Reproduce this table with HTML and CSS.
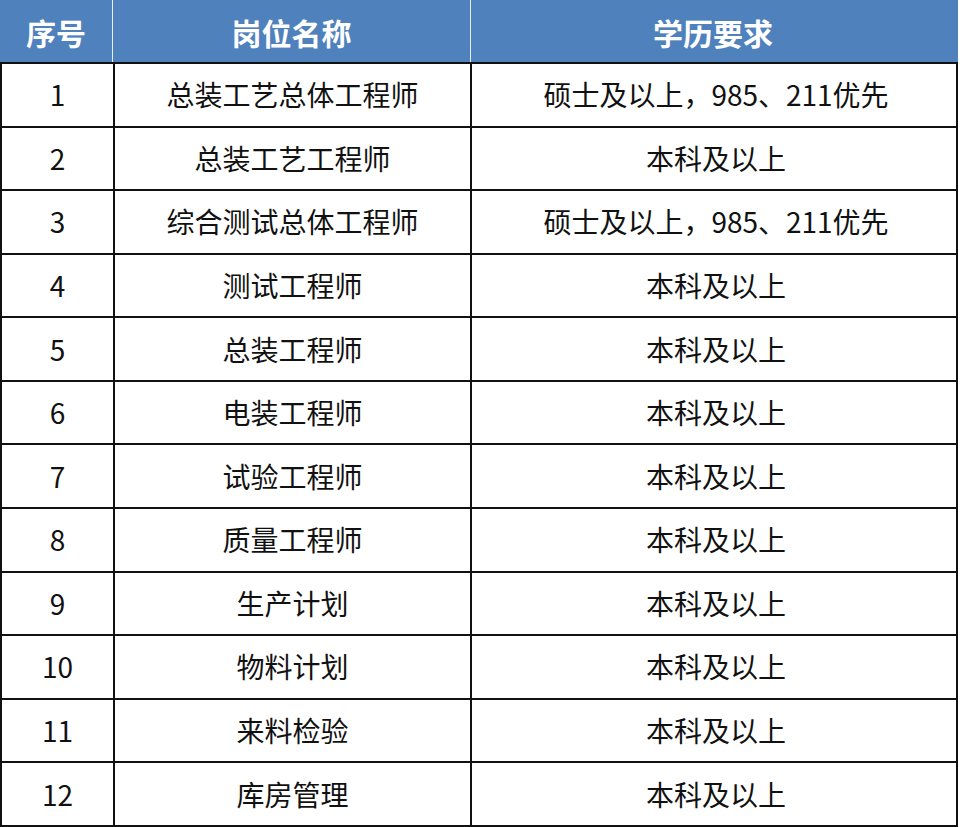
FILE: index.html
```html
<!DOCTYPE html>
<html lang="zh">
<head>
<meta charset="utf-8">
<link rel="stylesheet" href="styles.css">
</head>
<body>
<div class="sheet">
  <div class="row head">
    <div class="cell c1">序号</div>
    <div class="cell c2">岗位名称</div>
    <div class="cell c3">学历要求</div>
  </div>
  <div class="row"><div class="cell c1">1</div><div class="cell c2">总装工艺总体工程师</div><div class="cell c3">硕士及以上，985、211优先</div></div>
  <div class="row"><div class="cell c1">2</div><div class="cell c2">总装工艺工程师</div><div class="cell c3">本科及以上</div></div>
  <div class="row"><div class="cell c1">3</div><div class="cell c2">综合测试总体工程师</div><div class="cell c3">硕士及以上，985、211优先</div></div>
  <div class="row"><div class="cell c1">4</div><div class="cell c2">测试工程师</div><div class="cell c3">本科及以上</div></div>
  <div class="row"><div class="cell c1">5</div><div class="cell c2">总装工程师</div><div class="cell c3">本科及以上</div></div>
  <div class="row"><div class="cell c1">6</div><div class="cell c2">电装工程师</div><div class="cell c3">本科及以上</div></div>
  <div class="row"><div class="cell c1">7</div><div class="cell c2">试验工程师</div><div class="cell c3">本科及以上</div></div>
  <div class="row"><div class="cell c1">8</div><div class="cell c2">质量工程师</div><div class="cell c3">本科及以上</div></div>
  <div class="row"><div class="cell c1">9</div><div class="cell c2">生产计划</div><div class="cell c3">本科及以上</div></div>
  <div class="row"><div class="cell c1">10</div><div class="cell c2">物料计划</div><div class="cell c3">本科及以上</div></div>
  <div class="row"><div class="cell c1">11</div><div class="cell c2">来料检验</div><div class="cell c3">本科及以上</div></div>
  <div class="row last"><div class="cell c1">12</div><div class="cell c2">库房管理</div><div class="cell c3">本科及以上</div></div>
</div>
</body>
</html>
```
FILE: styles.css
```css
html, body {
  margin: 0;
  padding: 0;
  background: #ffffff;
}
body {
  font-family: "Noto Sans CJK SC", "Noto Sans", sans-serif;
  color: #111111;
}
.sheet {
  width: 958px;
  display: flex;
  flex-direction: column;
}
.row {
  display: grid;
  grid-template-columns: 113px 357px 488px;
  height: 63.58px;
  box-sizing: border-box;
  border-top: 2px solid #111111;
  border-left: 2px solid #111111;
  border-right: 2px solid #111111;
}
.row.last {
  height: 65.58px;
  border-bottom: 2px solid #111111;
}
.cell {
  display: flex;
  align-items: center;
  justify-content: center;
  font-size: 28px;
  line-height: 1;
  padding-bottom: 1px;
}
.c1, .c2 {
  border-right: 2px solid #111111;
}
.c1 {
  margin-left: -2px;
}
.row .c1 {
  padding-left: 2px;
}
.head {
  height: 62px;
  border: none;
  background: #4f81bd;
}
.head .cell {
  color: #ffffff;
  font-weight: 700;
  font-size: 30px;
  padding-top: 2px;
}
.head .c1, .head .c2 {
  border-right: 1px solid #e8eef7;
}
.head .c1 {
  margin-left: 0;
  padding-left: 0;
}
.head .c2 {
  margin-right: -1px;
}
.head .c3 {
  margin-right: 2px;
}
```
